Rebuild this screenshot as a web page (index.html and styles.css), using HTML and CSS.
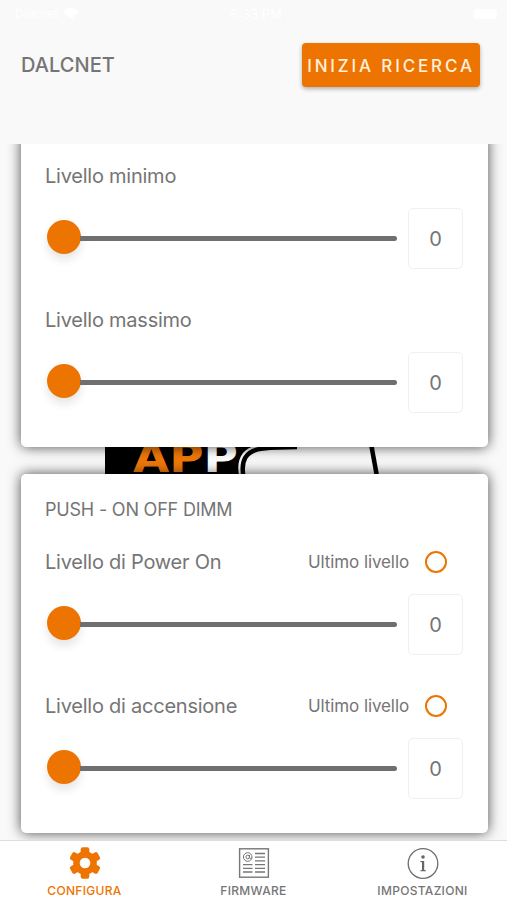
FILE: index.html
```html
<!DOCTYPE html>
<html lang="it">
<head>
    <meta charset="UTF-8">
    <meta name="viewport" content="width=device-width, initial-scale=1.0">
    <title>Dalcnet</title>
    <link rel="stylesheet" href="styles.css">
</head>
<body>
    <header class="header">
        <div class="status-bar">
            <span class="carrier">
                <span>Dalcnet</span>
                <svg width="16" height="11" viewBox="0 0 16 11"><path d="M0 4Q8-4 16 4L8 11Z" fill="#fff"/></svg>
            </span>
            <span class="time">6:33 PM</span>
            <span class="battery"></span>
        </div>
        <div class="toolbar">
            <h1>DALCNET</h1>
            <button class="search-button" type="button">INIZIA RICERCA</button>
        </div>
    </header>

    <main class="content">
        <!-- logo dietro le schede -->
        <svg class="logo" width="290" height="44" viewBox="0 0 290 44">
            <path d="M0 0H150V44H0Z" fill="#000"/>
            <text class="logo-text" x="28" y="33.500" textLength="105" lengthAdjust="spacingAndGlyphs"><tspan fill="#f0780a">AP</tspan><tspan fill="#fff">P</tspan></text>
            <path d="M134.500 40C130 20 138 8 158 6L200 3V0H274V44H134.500Z" fill="#f9f9f9"/>
            <path d="M139.500 44C134 22 141 12 158 10.500L165 9.700L192 9" fill="none" stroke="#000" stroke-width="4.500"/>
            <path d="M160 8H194L160 12Z" fill="#000"/>
            <path d="M265 0L273 44" fill="none" stroke="#000" stroke-width="4.500"/>
        </svg>

        <section class="card card-first">
            <div class="setting">
                <div class="setting-head"><label>Livello minimo</label></div>
                <div class="setting-row">
                    <div class="slider"><span class="thumb"></span><span class="track"></span></div>
                    <div class="value">0</div>
                </div>
            </div>
            <div class="setting">
                <div class="setting-head"><label>Livello massimo</label></div>
                <div class="setting-row">
                    <div class="slider"><span class="thumb"></span><span class="track"></span></div>
                    <div class="value">0</div>
                </div>
            </div>
        </section>

        <section class="card">
            <h2>PUSH - ON OFF DIMM</h2>
            <div class="setting">
                <div class="setting-head">
                    <label>Livello di Power On</label>
                    <span class="last-level">Ultimo livello</span>
                    <span class="radio"></span>
                </div>
                <div class="setting-row">
                    <div class="slider"><span class="thumb"></span><span class="track"></span></div>
                    <div class="value">0</div>
                </div>
            </div>
            <div class="setting">
                <div class="setting-head">
                    <label>Livello di accensione</label>
                    <span class="last-level">Ultimo livello</span>
                    <span class="radio"></span>
                </div>
                <div class="setting-row">
                    <div class="slider"><span class="thumb"></span><span class="track"></span></div>
                    <div class="value">0</div>
                </div>
            </div>
        </section>
    </main>

    <nav class="tabs">
        <a class="tab active">
            <svg width="32" height="34" viewBox="0 0 32 34">
                <g fill="#ee7402">
                    <circle cx="16" cy="17" r="11.800"/>
                    <rect x="11.700" y="1.200" width="8.600" height="31.600" rx="2"/>
                    <rect x="11.700" y="1.200" width="8.600" height="31.600" rx="2" transform="rotate(60 16 17)"/>
                    <rect x="11.700" y="1.200" width="8.600" height="31.600" rx="2" transform="rotate(120 16 17)"/>
                </g>
                <circle cx="16" cy="17" r="5.300" fill="#fff"/>
            </svg>
            <span>CONFIGURA</span>
        </a>
        <a class="tab">
            <svg width="32" height="34" viewBox="0 0 32 34" fill="none" stroke="#777">
                <rect x="1.600" y="2.800" width="28.800" height="28.400" stroke-width="1.400"/>
                <circle cx="9.700" cy="11" r="4.300"/>
                <circle cx="9.700" cy="11" r="1.800"/>
                <path d="M11.500 9V12Q12.500 13.500 14 11.500"/>
                <path d="M17 7.500H27M17 11.200H27M17 14.900H27M5 18.600H14.500M17 18.600H27M5 22.300H14.500M17 22.300H27M5 26H14.500M17 26H27" stroke-width="1.300"/>
            </svg>
            <span>FIRMWARE</span>
        </a>
        <a class="tab">
            <svg width="32" height="34" viewBox="0 0 32 34">
                <circle cx="16" cy="17.500" r="14.800" fill="none" stroke="#6e6e6e" stroke-width="1.300"/>
                <circle cx="16" cy="11" r="1.800" fill="#666"/>
                <path d="M13.300 15H17.200V24L19 24.500V25.300H13.300V24.500L15 24V16.300L13.300 15.900Z" fill="#666"/>
            </svg>
            <span>IMPOSTAZIONI</span>
        </a>
    </nav>
</body>
</html>
```

FILE: styles.css
```css
* {
    box-sizing: border-box;
}
body {
    margin: 0;
    height: 900px;
    display: flex;
    flex-direction: column;
    overflow: hidden;
    background: #f9f9f9;
    color: #757575;
    font-family: Inter, "Liberation Sans", sans-serif;
}
.header {
    height: 144px;
    flex: none;
}
.status-bar {
    height: 26px;
    padding: 1px 10px 0 15px;
    display: grid;
    grid-template-columns: 1fr auto 1fr;
    align-items: center;
    color: #fff;
    font-size: 13px;
}
.carrier {
    display: flex;
    align-items: center;
    gap: 5px;
}
.carrier span {
    font-size: 12px;
}
.battery {
    justify-self: end;
    width: 23px;
    height: 10px;
    border-radius: 3px;
    background: #fff;
}
.toolbar {
    display: flex;
    justify-content: space-between;
    align-items: center;
    height: 78px;
    padding: 0 27px 0 21px;
}
h1 {
    margin: 0;
    font-size: 20px;
    font-weight: 500;
    letter-spacing: 0.05px;
}
.search-button {
    width: 178px;
    height: 44px;
    padding: 1px 0 0;
    border: none;
    border-radius: 4px;
    background: #ee7402;
    color: #fff1dc;
    font-family: inherit;
    font-size: 17px;
    font-weight: 500;
    letter-spacing: 2.85px;
    white-space: nowrap;
    box-shadow: 0 2px 4px rgba(0, 0, 0, 0.3);
}
.content {
    position: relative;
    flex: 1;
    overflow: hidden;
    padding: 0 19.5px 0 20.5px;
}
.logo {
    position: absolute;
    left: 105px;
    top: 294px;
}
.logo-text {
    font: bold 41px "DejaVu Sans", sans-serif;
}
.card {
    position: relative;
    margin-bottom: 27px;
    padding: 24px 24.5px 34px;
    border-radius: 5px;
    background: #fff;
    box-shadow: 0 0 13px rgba(0, 0, 0, 0.7);
}
.card-first {
    margin-top: -10px;
    padding-top: 27px;
}
h2 {
    margin: 0 0 25px;
    font-size: 18px;
    font-weight: 400;
    line-height: 24px;
    letter-spacing: -0.2px;
}
.setting + .setting {
    margin-top: 36px;
}
.setting-head {
    display: flex;
    align-items: center;
    height: 30px;
    margin-bottom: 17px;
    font-size: 20px;
    letter-spacing: -0.24px;
}
.last-level {
    margin-left: auto;
    font-size: 17px;
    letter-spacing: -0.1px;
}
.radio {
    width: 22px;
    height: 22px;
    margin: 0 16px;
    border: 2.5px solid #ee7402;
    border-radius: 50%;
}
.setting-row {
    display: flex;
    align-items: center;
    gap: 11px;
    height: 61px;
}
.slider {
    flex: 1;
    display: flex;
    align-items: center;
    height: 34px;
    padding-left: 2px;
}
.track {
    flex: 1;
    height: 5px;
    border-radius: 0 3px 3px 0;
    background: #6f6f6f;
}
.thumb {
    width: 34px;
    height: 34px;
    margin: -4px -1px 0 0;
    border-radius: 50%;
    background: #ee7402;
    box-shadow: 0 6px 10px rgba(0, 0, 0, 0.1);
}
.value {
    width: 55px;
    height: 61px;
    border: 1px solid #f0f0f0;
    border-radius: 5px;
    font-size: 20px;
    line-height: 61px;
    text-align: center;
}
.tabs {
    flex: none;
    position: relative;
    display: flex;
    height: 60px;
    border-top: 1px solid #ddd;
    background: #fff;
}
.tab {
    flex: 1;
    display: flex;
    flex-direction: column;
    align-items: center;
    padding-top: 5px;
    font-size: 12px;
    font-weight: 500;
    line-height: 16px;
    letter-spacing: 0.3px;
}
.tab span {
    margin-top: 3px;
}
.tab.active {
    color: #ee7402;
}
```
